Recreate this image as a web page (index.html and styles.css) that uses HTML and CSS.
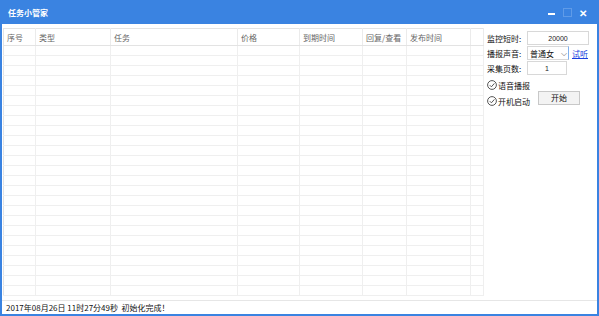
FILE: index.html
```html
<!DOCTYPE html>
<html lang="zh-CN">
<head>
    <meta charset="UTF-8">
    <title>任务小管家</title>
    <link rel="stylesheet" href="styles.css">
</head>
<body>
    <div class="window">
        <div class="titlebar">
            <span class="title">任务小管家</span>
            <div class="controls">
                <span class="ctl min"></span>
                <span class="ctl max"></span>
                <span class="ctl close">✕</span>
            </div>
        </div>
        <div class="body">
            <div class="main">
                <table class="grid">
                    <colgroup>
                        <col style="width:32px"><col style="width:75px"><col style="width:127px"><col style="width:62px">
                        <col style="width:63px"><col style="width:44px"><col style="width:64px"><col style="width:13px">
                    </colgroup>
                    <thead>
                        <tr>
                            <th>序号</th><th>类型</th><th>任务</th><th>价格</th>
                            <th>到期时间</th><th>回复/查看</th><th>发布时间</th><th></th>
                        </tr>
                    </thead>
                    <tbody id="rows"></tbody>
                </table>
                <div class="side">
                    <div class="field">
                        <label>监控短时:</label>
                        <input class="num wide" type="text" value="20000">
                    </div>
                    <div class="field">
                        <label>播报声音:</label>
                        <div class="select">普通女<span class="arrow">⌵</span></div>
                        <a class="link" href="#">试听</a>
                    </div>
                    <div class="field">
                        <label>采集页数:</label>
                        <input class="num" type="text" value="1">
                    </div>
                    <div class="options">
                        <div class="checks">
                            <div class="check">
                                <svg class="tick" viewBox="0 0 10 10"><circle cx="5" cy="5" r="4.4"/><path d="M2.8 5.2 L4.4 6.8 L7.4 3.4"/></svg>
                                语音播报
                            </div>
                            <div class="check">
                                <svg class="tick" viewBox="0 0 10 10"><circle cx="5" cy="5" r="4.4"/><path d="M2.8 5.2 L4.4 6.8 L7.4 3.4"/></svg>
                                开机启动
                            </div>
                        </div>
                        <button class="btn">开始</button>
                    </div>
                </div>
            </div>
            <div class="status">2017年08月26日 11时27分49秒&nbsp;&nbsp;初始化完成！</div>
        </div>
    </div>

    <script>
        // linhas vazias da grade
        var tbody = document.getElementById('rows');
        for (var i = 0; i < 25; i++) {
            var tr = document.createElement('tr');
            for (var j = 0; j < 8; j++) {
                tr.appendChild(document.createElement('td'));
            }
            tbody.appendChild(tr);
        }
    </script>
</body>
</html>
```

FILE: styles.css
```css
body {
    margin: 0;
    padding: 0;
    background-color: #fff;
    font-family: "Noto Sans CJK SC", "Liberation Sans", sans-serif;
    font-size: 8px;
}
.window {
    width: 599px;
    height: 316px;
    display: flex;
    flex-direction: column;
}
.titlebar {
    height: 24px;
    background-color: #3a83e1;
    color: #fff;
    display: flex;
    align-items: center;
    justify-content: space-between;
}
.title {
    padding-left: 8px;
    font-size: 8px;
    font-weight: bold;
}
.controls {
    display: flex;
    align-items: center;
    padding-right: 9px;
}
.ctl {
    width: 14px;
    height: 14px;
    display: flex;
    align-items: center;
    justify-content: center;
    margin-left: 2px;
}
.ctl.min::before {
    content: "";
    width: 7px;
    height: 2px;
    background: #fff;
    margin-top: 3px;
}
.ctl.max::before {
    content: "";
    width: 7px;
    height: 7px;
    border: 1px solid #5f9be8;
}
.ctl.close {
    font-size: 10px;
    font-weight: bold;
}
.body {
    flex: 1;
    display: flex;
    flex-direction: column;
    border: 2px solid #3a83e1;
    border-top: none;
}
.main {
    flex: 1;
    display: flex;
    padding: 4px 0 0 1px;
    min-height: 0;
}
.grid {
    width: 480px;
    table-layout: fixed;
    border-collapse: collapse;
    border: 1px solid #e3e3e3;
    align-self: flex-start;
}
.grid th {
    height: 16px;
    padding: 0 0 0 3px;
    font-weight: normal;
    text-align: left;
    color: #666;
    font-size: 8px;
    border-right: 1px solid #ebebeb;
    border-bottom: 1px solid #e3e3e3;
    white-space: nowrap;
    overflow: hidden;
}
.grid td {
    height: 9px;
    padding: 0;
    border-right: 1px solid #efefef;
    border-bottom: 1px solid #efefef;
}
.side {
    flex: 1;
    padding: 3px 0 0 3px;
    display: flex;
    flex-direction: column;
    gap: 1px;
}
.field {
    display: flex;
    align-items: center;
    height: 14px;
}
.field label {
    width: 40px;
    white-space: nowrap;
    color: #111;
}
.num {
    box-sizing: border-box;
    width: 40px;
    height: 14px;
    border: 1px solid #d8d8d8;
    padding: 0;
    text-align: center;
    font-family: "Liberation Sans", sans-serif;
    font-size: 7px;
    color: #222;
}
.num.wide {
    width: 62px;
}
.select {
    box-sizing: border-box;
    width: 42px;
    height: 14px;
    border: 1px solid #d8d8d8;
    border-right-color: #7fb0ee;
    display: flex;
    align-items: center;
    justify-content: space-between;
    padding: 0 1px 0 2px;
    color: #111;
}
.arrow {
    font-size: 8px;
    color: #555;
}
.link {
    margin-left: 3px;
    color: #1a3fe0;
}
.options {
    display: flex;
    align-items: flex-end;
    margin-top: 2px;
}
.checks {
    display: flex;
    flex-direction: column;
    gap: 2px;
}
.check {
    display: flex;
    align-items: center;
    height: 14px;
    color: #111;
}
.tick {
    width: 10px;
    height: 10px;
    margin-right: 1px;
    fill: none;
    stroke: #444;
    stroke-width: 0.9;
}
.btn {
    margin-left: 8px;
    margin-bottom: 3px;
    width: 42px;
    height: 14px;
    padding: 0;
    border: 1px solid #c8c8c8;
    background: #f3f3f3;
    font-family: inherit;
    font-size: 8px;
    line-height: 12px;
    color: #111;
}
.status {
    height: 13px;
    border-top: 1px solid #e6e6e6;
    padding-left: 4px;
    line-height: 13px;
    color: #111;
}
```
